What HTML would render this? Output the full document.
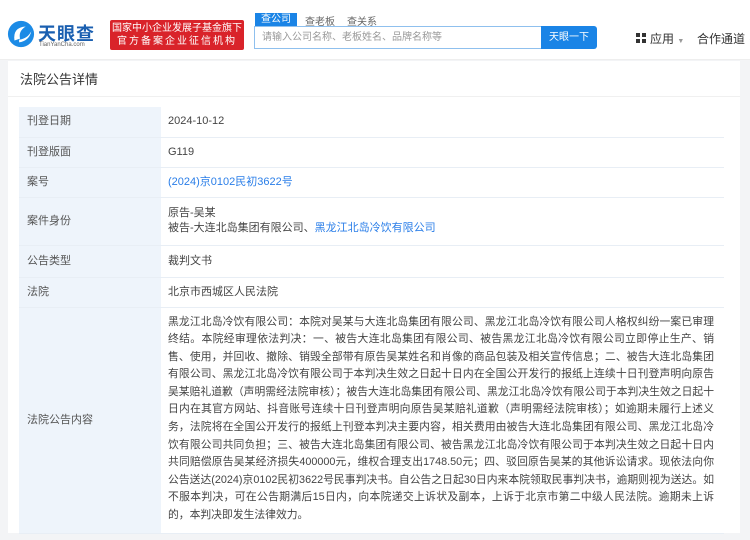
<!DOCTYPE html>
<html><head><meta charset="utf-8"><style>
*{margin:0;padding:0;box-sizing:border-box}
body{width:750px;height:540px;overflow:hidden;background:#f3f4f6;font-family:"Liberation Sans","Noto Sans CJK SC",sans-serif;color:#333;font-size:12px;position:relative}
.hdr{position:absolute;left:0;top:0;width:750px;height:60px;background:#fff;border-bottom:1px solid #eee}
.card{position:absolute;left:8px;top:61px;width:732px;height:472px;background:#fff}
.title{position:absolute;left:12px;top:8px;font-size:13px;color:#333}
.line{position:absolute;left:0;top:35px;width:732px;height:1px;background:#f0f0f0}
table{position:absolute;left:11px;top:46px;width:705px;border-collapse:collapse}
td{border-bottom:1px solid #e8eef5;vertical-align:middle;font-size:11px;line-height:15px}
td.l{width:142px;background:#eef4fb;color:#555;padding-left:8px}
td.v{padding-left:7px;color:#444}
a{color:#2a7ee8;text-decoration:none}
.long{line-height:17.6px;padding:6px 10px 8px 7px;font-size:10.8px;text-align:justify}
.nw{white-space:nowrap}
</style></head><body>
<div class="hdr">
<svg style="position:absolute;left:7px;top:20px" width="28" height="28" viewBox="0 0 30 30"><circle cx="15" cy="15" r="14" fill="#1c8be6"/><path d="M8 22 Q6 8 20 7 Q12 12 14 20 Z" fill="#fff"/><path d="M13 24 Q24 22 26 12 Q22 20 13 21Z" fill="#fff"/></svg>
<div class="nw" style="position:absolute;left:38px;top:20px;font-size:18px;font-weight:bold;color:#1a5fb0;letter-spacing:1px">天眼查</div>
<div class="nw" style="position:absolute;left:39px;top:42px;font-size:6px;color:#666">TianYanCha.com</div>
<div class="nw" style="position:absolute;left:110px;top:20px;width:134px;height:30px;background:#d9232a;border-radius:2px;color:#fff;font-size:10px;line-height:13px;text-align:center;padding-top:2px">国家中小企业发展子基金旗下<br><span style="letter-spacing:2px">官方备案企业征信机构</span></div>
<div class="nw" style="position:absolute;left:255px;top:13px;width:42px;height:13px;background:#1a84e6;color:#fff;font-size:10px;line-height:13px;text-align:center">查公司</div>
<div class="nw" style="position:absolute;left:305px;top:13px;font-size:10px;color:#666">查老板</div>
<div class="nw" style="position:absolute;left:347px;top:13px;font-size:10px;color:#666">查关系</div>
<div class="nw" style="position:absolute;left:254px;top:26px;width:288px;height:23px;border:1px solid #8fc0ee;background:#fff;font-size:10px;color:#999;line-height:21px;padding-left:7px">请输入公司名称、老板姓名、品牌名称等</div>
<div class="nw" style="position:absolute;left:541px;top:26px;width:56px;height:23px;background:#1a84e6;color:#fff;font-size:10px;line-height:23px;text-align:center;border-radius:0 3px 3px 0">天眼一下</div>
<div style="position:absolute;left:636px;top:33px;width:10px;height:10px;display:grid;grid-template-columns:4px 4px;gap:2px"><i style="background:#333"></i><i style="background:#333"></i><i style="background:#333"></i><i style="background:#333"></i></div>
<div class="nw" style="position:absolute;left:650px;top:30px;font-size:12px;color:#333">应用 <span style="font-size:7px;color:#999">▼</span></div>
<div class="nw" style="position:absolute;left:697px;top:30px;font-size:12px;color:#333">合作通道 <span style="font-size:7px;color:#999">▼</span></div>
</div>
<div class="card">
<div class="title">法院公告详情</div>
<div class="line"></div>
<table>
<tr style="height:30px"><td class="l">刊登日期</td><td class="v">2024-10-12</td></tr>
<tr style="height:30px"><td class="l">刊登版面</td><td class="v">G119</td></tr>
<tr style="height:30px"><td class="l">案号</td><td class="v"><a>(2024)京0102民初3622号</a></td></tr>
<tr style="height:48px"><td class="l">案件身份</td><td class="v">原告-吴某<br>被告-大连北岛集团有限公司、<a>黑龙江北岛冷饮有限公司</a></td></tr>
<tr style="height:32px"><td class="l">公告类型</td><td class="v">裁判文书</td></tr>
<tr style="height:30px"><td class="l">法院</td><td class="v">北京市西城区人民法院</td></tr>
<tr><td class="l">法院公告内容</td><td class="v long">黑龙江北岛冷饮有限公司：本院对吴某与大连北岛集团有限公司、黑龙江北岛冷饮有限公司人格权纠纷一案已审理终结。本院经审理依法判决：一、被告大连北岛集团有限公司、被告黑龙江北岛冷饮有限公司立即停止生产、销售、使用，并回收、撤除、销毁全部带有原告吴某姓名和肖像的商品包装及相关宣传信息；二、被告大连北岛集团有限公司、黑龙江北岛冷饮有限公司于本判决生效之日起十日内在全国公开发行的报纸上连续十日刊登声明向原告吴某赔礼道歉（声明需经法院审核）；被告大连北岛集团有限公司、黑龙江北岛冷饮有限公司于本判决生效之日起十日内在其官方网站、抖音账号连续十日刊登声明向原告吴某赔礼道歉（声明需经法院审核）；如逾期未履行上述义务，法院将在全国公开发行的报纸上刊登本判决主要内容，相关费用由被告大连北岛集团有限公司、黑龙江北岛冷饮有限公司共同负担；三、被告大连北岛集团有限公司、被告黑龙江北岛冷饮有限公司于本判决生效之日起十日内共同赔偿原告吴某经济损失400000元，维权合理支出1748.50元；四、驳回原告吴某的其他诉讼请求。现依法向你公告送达(2024)京0102民初3622号民事判决书。自公告之日起30日内来本院领取民事判决书，逾期则视为送达。如不服本判决，可在公告期满后15日内，向本院递交上诉状及副本，上诉于北京市第二中级人民法院。逾期未上诉的，本判决即发生法律效力。</td></tr>
</table>
</div>
</body></html>
